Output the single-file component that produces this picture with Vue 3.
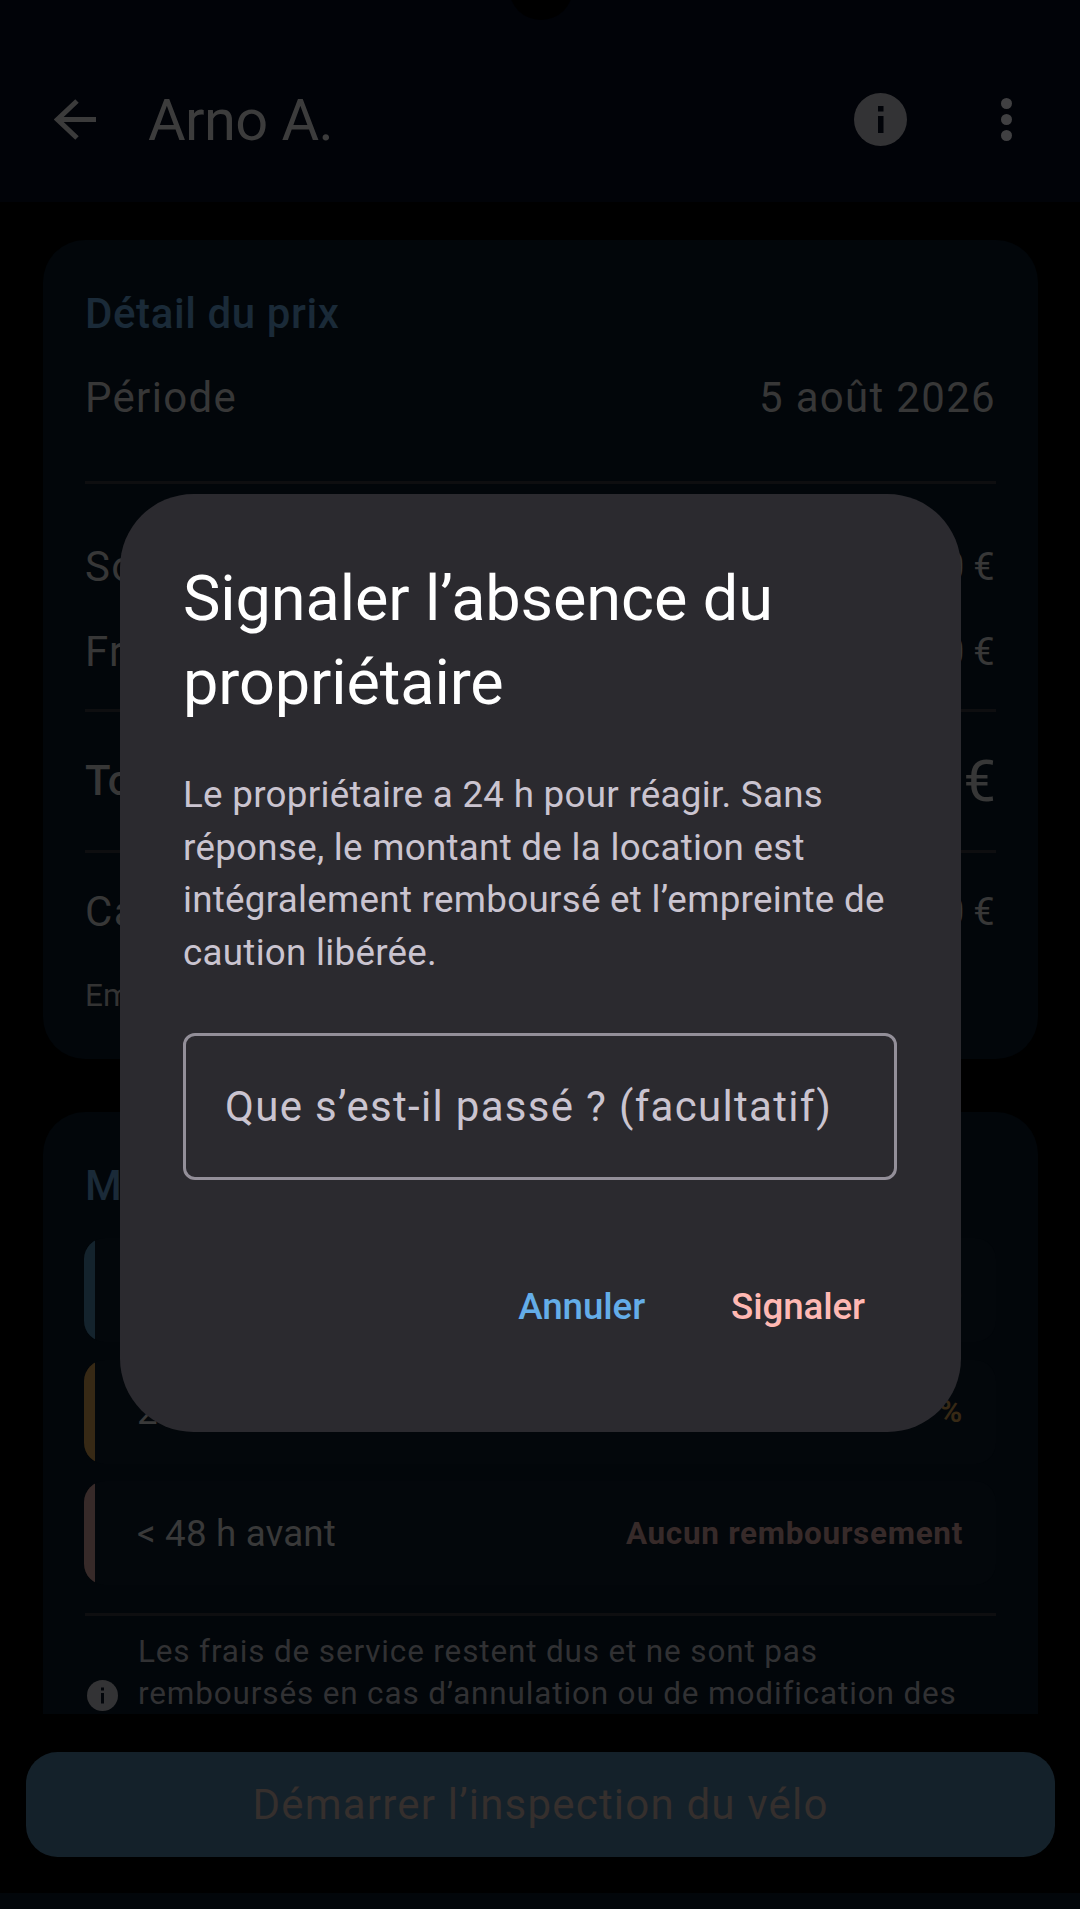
<template>
  <div class="screen">
    <header class="topbar">
      <div class="notch"></div>
      <svg class="back" viewBox="0 0 42 42" width="42" height="42">
        <path d="M42 20.500H5M23 2L3.500 20.500L23 39" fill="none" stroke="#3b3b3b" stroke-width="5" />
      </svg>
      <h1 class="name">Arno A.</h1>
      <svg class="info" viewBox="0 0 53 53" width="53" height="53">
        <circle cx="26.500" cy="26.500" r="26.500" fill="#333335" />
        <rect x="24" y="13" width="5.500" height="5.500" fill="#010308" />
        <rect x="24" y="23" width="5.500" height="17" fill="#010308" />
      </svg>
      <div class="dots"><i></i><i></i><i></i></div>
    </header>

    <main class="scroll">
      <section class="card">
        <h2 class="card-title">Détail du prix</h2>
        <div class="line period"><span>Période</span><span>5 août 2026</span></div>
        <hr />
        <div class="line first"><span>Sous-total</span><span class="amount">45,00 €</span></div>
        <div class="line second"><span>Frais de service</span><span class="amount">5,00 €</span></div>
        <hr class="rule-b" />
        <div class="line total"><span>Total</span><span>50,00 €</span></div>
        <hr class="rule-c" />
        <div class="line deposit"><span>Caution</span><span class="amount">200,00 €</span></div>
        <p class="hold">Empreinte bancaire</p>
      </section>

      <section class="card policy">
        <h2 class="card-title">Modalités d’annulation</h2>
        <div v-for="row in rows" :key="row.label" class="row" :class="row.kind">
          <i class="bar"></i>
          <span>{{ row.label }}</span>
          <strong>{{ row.value }}</strong>
        </div>
        <hr class="rule-d" />
        <div class="note">
          <svg viewBox="0 0 31 31" width="31" height="31">
            <circle cx="15.500" cy="15.500" r="15.500" fill="#333335" />
            <rect x="14" y="7.500" width="3" height="3" fill="#02050a" />
            <rect x="14" y="13" width="3" height="10.500" fill="#02050a" />
          </svg>
          <p>Les frais de service restent dus et ne sont pas remboursés en cas d’annulation ou de modification des dates de la location par le locataire.</p>
        </div>
      </section>
    </main>

    <footer class="bottom">
      <button class="start">Démarrer l’inspection du vélo</button>
    </footer>
    <div class="navstrip"></div>

    <div class="overlay">
      <div class="dialog">
        <h2 class="dialog-title">Signaler l’absence du propriétaire</h2>
        <p class="dialog-body">Le propriétaire a 24 h pour réagir. Sans réponse, le montant de la location est intégralement remboursé et l’empreinte de caution libérée.</p>
        <div class="field">Que s’est-il passé ? (facultatif)</div>
        <div class="actions">
          <button class="cancel">Annuler</button>
          <button class="confirm">Signaler</button>
        </div>
      </div>
    </div>
  </div>
</template>

<script setup>
const rows = [
  { label: "> 7 jours avant", value: "100 %", kind: "full" },
  { label: "2 à 7 jours avant", value: "50 %", kind: "half" },
  { label: "< 48 h avant", value: "Aucun remboursement", kind: "none" },
];
</script>

<style>
html,
body {
  margin: 0;
  background: #000;
}
</style>

<style scoped>
.screen {
  position: relative;
  display: flex;
  flex-direction: column;
  width: 1080px;
  height: 1909px;
  overflow: hidden;
  background: #000;
  font-family: Roboto, "Liberation Sans", sans-serif;
  color: #3b3b3b;
}

.topbar {
  position: relative;
  display: flex;
  align-items: center;
  flex: 0 0 202px;
  box-sizing: border-box;
  padding: 37px 0 0 54px;
  background: #010308;
}

.notch {
  position: absolute;
  top: -44px;
  left: 509px;
  width: 64px;
  height: 64px;
  border-radius: 50%;
  background: #000;
}

.name {
  flex: 1;
  margin: 0 0 0 52px;
  font-size: 57.750px;
  font-weight: 400;
  letter-spacing: -0.600px;
  color: #3c3c3c;
}

.info {
  margin-right: 94px;
}

.dots {
  display: flex;
  flex-direction: column;
  gap: 5px;
  margin-right: 68px;
}

.dots i {
  width: 11px;
  height: 11px;
  border-radius: 50%;
  background: #404042;
}

.scroll {
  flex: 0 0 1512px;
  box-sizing: border-box;
  padding: 38px 42px 0 43px;
  overflow: hidden;
}

.card {
  box-sizing: border-box;
  height: 819px;
  padding: 53px 42px 0;
  border-radius: 42px;
  background: #02060a;
}

.card-title {
  margin: 0;
  font-size: 42px;
  font-weight: 500;
  line-height: 42px;
  letter-spacing: 0.600px;
  color: #1a2a38;
}

.line {
  display: flex;
  justify-content: space-between;
  font-size: 42px;
  line-height: 42px;
  letter-spacing: 1.310px;
  color: #373737;
}

.amount {
  font-size: 38px;
  word-spacing: -3px;
}

.card hr {
  height: 3px;
  margin: 0;
  border: 0;
  background: #0e0e10;
}

.period {
  margin: 42px 0 62px;
}

.first {
  margin-top: 62px;
}

.second {
  margin-top: 43px;
}

.card .rule-b {
  margin-top: 36px;
}

.total {
  margin-top: 43px;
  font-weight: 500;
  letter-spacing: 0;
  line-height: 52px;
}

.total span + span {
  font-size: 57.750px;
  font-weight: 400;
}

.card .rule-c {
  margin-top: 43px;
}

.deposit {
  margin-top: 38px;
}

.hold {
  margin: 42px 0 0;
  font-size: 31.500px;
  line-height: 42px;
  color: #333;
}

.policy {
  height: 900px;
  margin-top: 53px;
}

.policy .card-title {
  margin-bottom: 31px;
}

.row {
  display: flex;
  align-items: center;
  box-sizing: border-box;
  height: 104px;
  margin: 0 0 17.500px -1px;
  padding-right: 33px;
  overflow: hidden;
  border-radius: 21px;
  background: #03070b;
  font-size: 36.750px;
  letter-spacing: 0.150px;
}

.bar {
  flex: 0 0 11px;
  align-self: stretch;
  margin-right: 42px;
  background: currentColor;
}

.row span {
  flex: 1;
  color: #393939;
}

.row strong {
  font-size: 31.500px;
  font-weight: 700;
  letter-spacing: 0.680px;
}

.full {
  color: #14232d;
}

.half {
  color: #372915;
}

.none {
  color: #372a29;
}

.card .rule-d {
  margin-top: 27.500px;
}

.note {
  display: flex;
  align-items: center;
  gap: 20px;
  margin: 15px 0 0 2px;
}

.note svg {
  flex: none;
  margin-top: 2px;
}

.note p {
  max-width: 830px;
  margin: 0;
  font-size: 31.500px;
  line-height: 42.500px;
  letter-spacing: 0.840px;
  color: #313133;
}

.bottom {
  flex: 1;
  box-sizing: border-box;
  padding: 38px 25px 0 26px;
}

.start {
  display: block;
  width: 100%;
  height: 105px;
  border: 0;
  border-radius: 31.500px;
  background: #14212a;
  font-family: inherit;
  font-size: 42px;
  letter-spacing: 1.200px;
  color: #352f2d;
}

.navstrip {
  flex: 0 0 16px;
  background: #02060a;
}

.overlay {
  position: absolute;
  inset: 0;
  display: flex;
  justify-content: center;
  padding: 494px 0 0 1px;
  box-sizing: border-box;
}

.dialog {
  box-sizing: border-box;
  width: 841px;
  height: 938px;
  padding: 63px 64px 0 63px;
  border-radius: 73.500px;
  background: #2b2a2f;
}

.dialog-title {
  margin: 0;
  font-size: 63px;
  font-weight: 400;
  line-height: 84px;
  letter-spacing: -0.100px;
  color: #fff;
}

.dialog-body {
  margin: 44px 0 0;
  font-size: 36.750px;
  line-height: 52.500px;
  letter-spacing: 0.280px;
  color: #cac4d0;
}

.field {
  display: flex;
  align-items: center;
  box-sizing: border-box;
  height: 147px;
  margin-top: 54px;
  padding-left: 39px;
  border: 3px solid #938f99;
  border-radius: 12px;
  font-size: 42px;
  letter-spacing: 1.310px;
  color: #cac4d0;
}

.actions {
  display: flex;
  justify-content: flex-end;
  gap: 22px;
  margin-top: 74px;
}

.actions button {
  height: 105px;
  padding: 0 32px;
  border: 0;
  background: none;
  font-family: inherit;
  font-size: 36.750px;
  font-weight: 500;
  letter-spacing: -0.100px;
}

.cancel {
  color: #64ade8;
}

.confirm {
  color: #ffb8b3;
}
</style>
